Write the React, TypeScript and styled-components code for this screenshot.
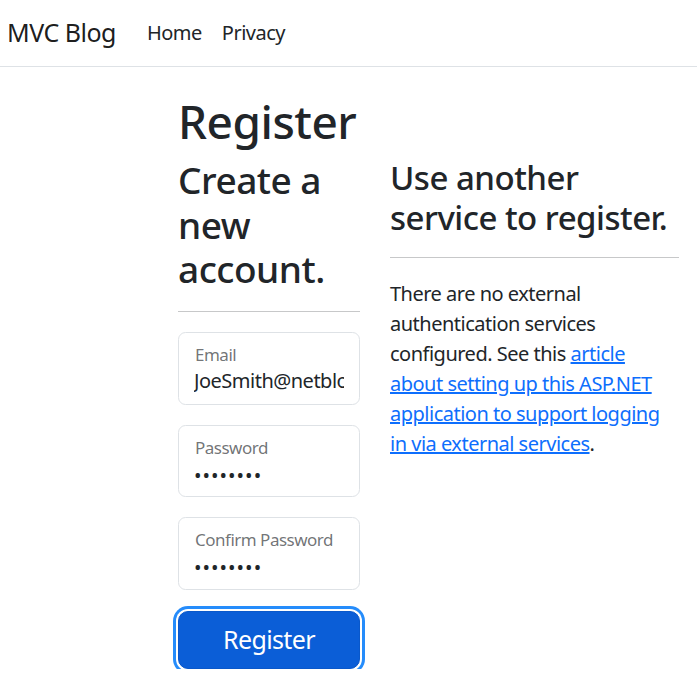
import React from "react";
import styled, { createGlobalStyle } from "styled-components";

const GlobalStyle = createGlobalStyle`
  html, body { margin: 0; padding: 0; background: #ffffff; }
  body {
    font-family: "Noto Sans", "Open Sans", "DejaVu Sans", sans-serif;
    color: #212529;
    font-size: 20px;
    line-height: 1.5;
    letter-spacing: -0.025em;
    overflow: hidden;
  }
  * { box-sizing: border-box; }
`;

const Navbar = styled.header`
  height: 67px;
  display: flex;
  align-items: center;
  padding-left: 7px;
  border-bottom: 1px solid #dee2e6;
`;

const Brand = styled.a`
  font-size: 25px;
  color: rgba(0, 0, 0, 0.9);
  text-decoration: none;
  margin-right: 21px;
  white-space: nowrap;
`;

const NavLink = styled.a`
  font-size: 20px;
  color: #212529;
  text-decoration: none;
  padding: 0 10px;
`;

const Main = styled.main`
  padding: 27px 0 0 178px;
`;

const Title = styled.h1`
  margin: 0 0 9px;
  font-size: 46px;
  font-weight: 500;
  line-height: 1.2;
`;

const Row = styled.div`
  display: grid;
  grid-template-columns: 182px 289px;
  column-gap: 30px;
  align-items: start;
`;

const Heading = styled.h2<{ $size: number }>`
  margin: 0;
  font-size: ${(p) => p.$size}px;
  font-weight: 500;
  line-height: 1.2;
`;

const Rule = styled.hr`
  margin: 20px 0 20px;
  border: 0;
  border-top: 1px solid #212529;
  opacity: 0.25;
`;

const Field = styled.div`
  position: relative;
  height: 72.5px;
  border: 1px solid #dee2e6;
  border-radius: 7.5px;
  margin-bottom: 20px;
  background: #fff;
  overflow: hidden;
`;

const FieldLabel = styled.label`
  position: absolute;
  left: 16px;
  top: 9px;
  font-size: 17px;
  line-height: 1.5;
  color: rgba(33, 37, 41, 0.65);
  pointer-events: none;
`;

const FieldInput = styled.input<{ $secret?: boolean }>`
  display: block;
  width: 100%;
  height: 100%;
  border: 0;
  outline: none;
  background: transparent;
  padding: ${(p) => (p.$secret ? "34px 15px 6px" : "32px 15px 8px")};
  font-family: inherit;
  font-size: 20px;
  line-height: 1.5;
  letter-spacing: ${(p) => (p.$secret ? "1px" : "-0.025em")};
  color: #212529;
`;

const SubmitButton = styled.button`
  display: block;
  width: 100%;
  height: 58px;
  margin-top: 21px;
  border: 1px solid #0a58ca;
  border-radius: 10px;
  background: #0b5ed7;
  color: #fff;
  font-family: inherit;
  font-size: 25px;
  line-height: 1.5;
  letter-spacing: -0.025em;
  box-shadow: 0 0 0 2px #fff, 0 0 0 5px #258cfb;
  cursor: pointer;
`;

const Paragraph = styled.p`
  margin: 0;
  padding-top: 1px;
  font-size: 20px;
  line-height: 30px;
`;

const Link = styled.a`
  color: #0d6efd;
  text-decoration: underline;
`;

const InputField = ({ label, type, value }: { label: string; type: string; value: string }) => (
  <Field>
    <FieldInput type={type} value={value} $secret={type === "password"} readOnly />
    <FieldLabel>{label}</FieldLabel>
  </Field>
);

export default function App() {
  return (
    <>
      <GlobalStyle />
      <Navbar>
        <Brand href="#">MVC Blog</Brand>
        <NavLink href="#">Home</NavLink>
        <NavLink href="#">Privacy</NavLink>
      </Navbar>
      <Main>
        <Title>Register</Title>
        <Row>
          <form onSubmit={(e) => e.preventDefault()}>
            <Heading $size={37}>Create a new account.</Heading>
            <Rule />
            <InputField label="Email" type="email" value="JoeSmith@netblog.com" />
            <InputField label="Password" type="password" value="password" />
            <InputField label="Confirm Password" type="password" value="password" />
            <SubmitButton type="submit">Register</SubmitButton>
          </form>
          <section>
            <Heading as="h3" $size={33}>Use another service to register.</Heading>
            <Rule />
            <Paragraph>
              There are no external authentication services configured. See this{" "}
              <Link href="#">article about setting up this ASP.NET application to support logging in via external services</Link>.
            </Paragraph>
          </section>
        </Row>
      </Main>
    </>
  );
}
